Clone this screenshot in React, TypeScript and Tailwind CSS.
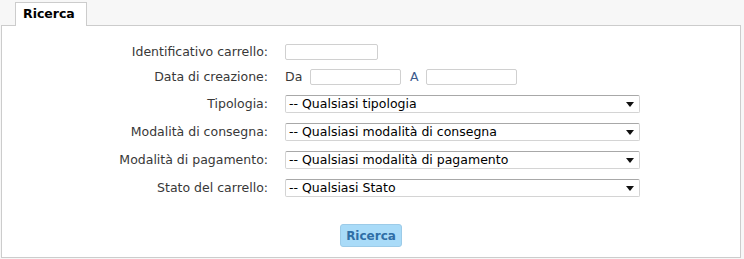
const SELECTS = [
  { label: "Tipologia:", value: "-- Qualsiasi tipologia" },
  { label: "Modalità di consegna:", value: "-- Qualsiasi modalità di consegna" },
  { label: "Modalità di pagamento:", value: "-- Qualsiasi modalità di pagamento" },
  { label: "Stato del carrello:", value: "-- Qualsiasi Stato" },
];

const TextBox = ({ width }: { width: string }) => (
  <div className={`${width} h-[16px] rounded-[2px] border border-[#d0d0d0] bg-white`} />
);

const SelectBox = ({ value }: { value: string }) => (
  <div className="flex h-[18px] w-[355px] items-center justify-between rounded-[2px] border border-[#d4d4d4] border-t-[#a8a8a8] bg-white pl-[3px] pr-[5px] text-black">
    <span className="leading-none">{value}</span>
    {/* arrow */}
    <svg width="8" height="5" viewBox="0 0 8 5">
      <path d="M0 0H8L4 5Z" fill="#111" />
    </svg>
  </div>
);

export default function App() {
  return (
    <div
      className="h-[259px] w-[744px] bg-[#f7f7f7] text-[12.5px] text-[#383838]"
      style={{ fontFamily: '"DejaVu Sans", Verdana, sans-serif' }}
    >
      {/* Tabs */}
      <div className="flex pl-[15px] pt-[2px]">
        <div className="relative z-10 -mb-px flex h-[24px] w-[72px] items-center border border-b-0 border-[#cccccc] bg-white pl-[7px] text-[12.5px] font-bold text-black">
          Ricerca
        </div>
      </div>

      {/* Panel */}
      <div className="ml-[1px] h-[233px] w-[740px] border border-[#cccccc] bg-white">
        <div className="grid grid-cols-[266px_1fr] gap-x-[17px] pt-[14px]">
          <div className="flex h-[24px] items-center justify-end">Identificativo carrello:</div>
          <div className="flex h-[24px] items-center">
            <TextBox width="w-[93px]" />
          </div>

          <div className="flex h-[26px] items-center justify-end">Data di creazione:</div>
          <div className="flex h-[26px] items-center">
            <span className="w-[25px]">Da</span>
            <TextBox width="w-[91px]" />
            <span className="ml-[9px] w-[16px] text-[#3b5a8c]">A</span>
            <TextBox width="w-[91px]" />
          </div>

          {SELECTS.map((s) => (
            <div key={s.label} className="contents">
              <div className="flex h-[28px] items-center justify-end">{s.label}</div>
              <div className="flex h-[28px] items-center">
                <SelectBox value={s.value} />
              </div>
            </div>
          ))}
        </div>

        <div className="mt-[22px] flex justify-center">
          <button className="h-[23px] w-[62px] rounded-[3px] border border-[#9ccbe8] bg-[#a9dbf8] text-[12px] font-bold text-[#2f6ea6]">
            Ricerca
          </button>
        </div>
      </div>
    </div>
  );
}
